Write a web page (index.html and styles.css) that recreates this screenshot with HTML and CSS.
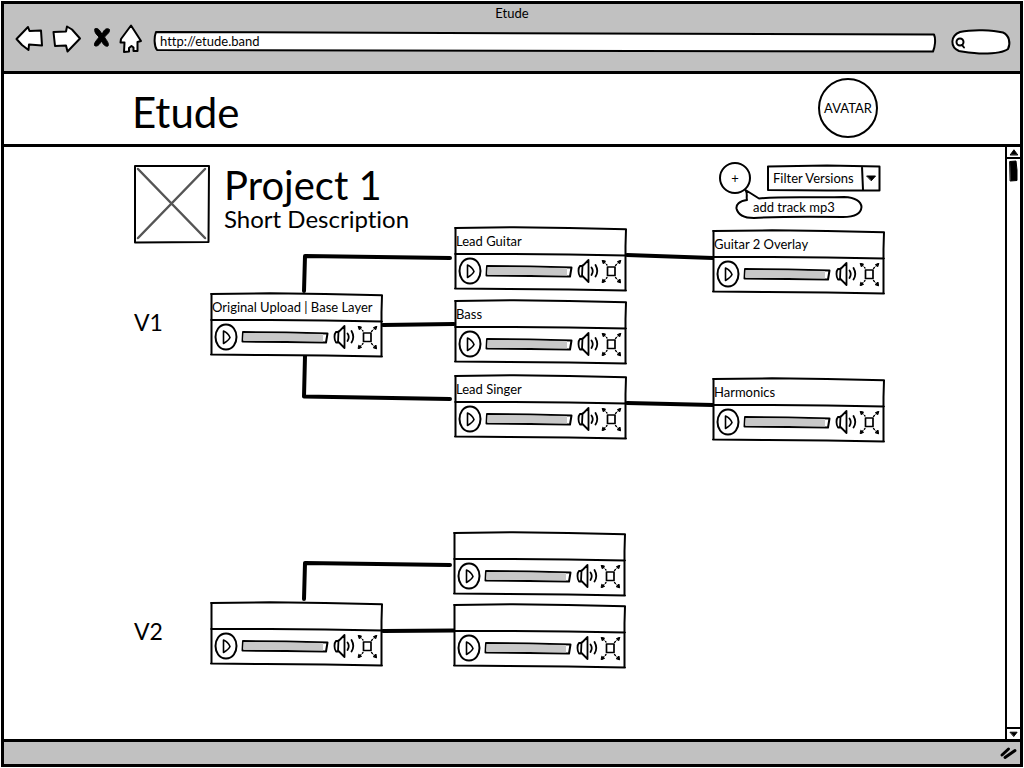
FILE: index.html
```html
<!DOCTYPE html>
<html lang="en">
<head>
<meta charset="utf-8">
<title>Etude</title>
<link rel="stylesheet" href="styles.css">
</head>
<body>
<svg class="defs" aria-hidden="true">
  <symbol id="frame" viewBox="0 0 174 66">
    <path fill="#fff" stroke="none" d="M1 2L172 3V64L1 62Z"/>
    <path d="M1 2L60 1.300L115 2L172 3.300M1.500 2V62.500M172 3.300L171.500 20L171.500 64.500M1 28L60 28L115 28.500L172 29.500M1 62.500L55 63L115 63.500L172 64.500"/>
  </symbol>
  <symbol id="play" viewBox="0 0 24 28">
    <path d="M12 1.500C19 1.500 22.500 8 22.500 14S19 26.500 12 26.500S1.500 20 1.500 14S5 1.500 12 1.500Z"/>
    <path stroke-width="1.600" d="M9.500 8V20.500C12 19 15 17 16 14.500C15 12 12 9 9.500 8Z"/>
  </symbol>
  <symbol id="bar" viewBox="0 0 88 14">
    <path fill="#fff" d="M2 2L45 2.500L86.500 3.500L85 12.500L45 12L1.500 11.500Z"/>
    <path fill="#c8c8c8" stroke="none" d="M2.500 3L45 3.500L82 4V11.500L45 11L2 10.500Z"/>
  </symbol>
  <symbol id="volume" viewBox="0 0 24 26">
    <path stroke-width="1.800" d="M5.500 8H3C1 10 1 16 3 18.500H5.500M5.500 7.500L5 18M5.500 8L11.500 2V24L5.500 18"/>
    <path stroke-width="1.800" d="M14.500 9.500Q17 13 14.500 17M18.500 7Q22 13 18.500 18.500"/>
  </symbol>
  <symbol id="expand" viewBox="0 0 22 26">
    <path stroke-width="1.700" d="M6.500 9H14V17.500H6.500Z"/>
    <path stroke-width="1.300" stroke-dasharray="3 2" d="M2 3L6 7M19 3L14.500 7.500M2 24L6 19.500M19 24L14.500 19.500"/>
    <path fill="#000" stroke-width="1" d="M1.500 2.500L4.500 3L2.500 5.500ZM19.500 2.500L16.500 3.500L18.500 5.500ZM1.500 24.500L4.500 23.500L2 21.500ZM19.500 24.500L19 21L16.500 23.500Z"/>
  </symbol>
</svg>

<div class="window">
  <div class="chrome">
    <div class="tab-title">Etude</div>
    <form class="toolbar">
      <button type="button" class="nav-btn nav-back" aria-label="Back">
        <svg viewBox="0 0 28 28"><path d="M1.500 15L13 3L14.500 7L26 6.500L27 21.500L14 20.500L13.500 26L7 21Z"/></svg>
      </button>
      <button type="button" class="nav-btn nav-forward" aria-label="Forward">
        <svg viewBox="0 0 28 28"><path d="M1.500 8L14 7.500L15 2.500L20 5.500L28 14.500L15.500 27.500L14 21.500L3 22Z"/></svg>
      </button>
      <button type="button" class="nav-btn nav-stop" aria-label="Stop">
        <svg viewBox="0 0 18 28"><path fill="#000" stroke-width="1" d="M2 5C4 3 7 6 9 10.500C11 5 14 3.500 16.500 5.500C17 9 13 11 11.500 13C13 16 16.500 19 15 22C12 23 10 20 8.500 17C7 20 4 23.500 1.500 21.500C1 18 5 15 6 13C3 10 1 8 2 5Z"/></svg>
      </button>
      <button type="button" class="nav-btn nav-home" aria-label="Home">
        <svg viewBox="0 0 24 28"><path d="M12 1.500L22 17L18.500 18L18.500 27H14.500L14.500 23.500L12.500 22L10 24V27.500L5 28L5.500 18.500H1.500L2 15Z"/></svg>
      </button>
      <label class="field url">
        <svg viewBox="0 0 784 22" preserveAspectRatio="none"><path d="M3 1L782 3.500C784 8 783 16 781 20.500L4 19C1 15 1 6 3 1Z"/></svg>
        <input type="text" value="http://etude.band" aria-label="Address">
      </label>
      <label class="field search">
        <svg viewBox="0 0 60 26"><path d="M9 3C22 0 42 1 52 3.500C58 6 60 14 57 20C52 24 40 24.500 32 24.500C24 24.500 15 23 8 22C-1 18 -1 7 9 3Z"/><circle cx="9" cy="13" r="3.500"/><path d="M11 16L13 18.500"/></svg>
        <input type="search" aria-label="Search">
      </label>
    </form>
  </div>

  <header class="site-header">
    <div class="site-inner">
      <h1>Etude</h1>
      <button type="button" class="avatar">AVATAR</button>
    </div>
  </header>

  <div class="viewport">
    <main class="content">
      <div class="project">
        <svg class="thumb" viewBox="0 0 78 80" role="img" aria-label="Project image"><path class="cross" d="M4 4L71 73M71 4L4 73"/><path d="M1 1L75 1L74.500 77L1 77.500Z"/></svg>
        <div class="project-text">
          <h2>Project 1</h2>
          <p>Short Description</p>
        </div>
        <div class="actions">
          <div class="add-wrap">
            <button type="button" class="add" aria-label="Add track" aria-describedby="add-tip">+</button>
            <div class="tip" id="add-tip" role="tooltip">
              <svg viewBox="0 0 128 30"><path d="M10.500 1C13 5 11 8 12 11C4 12 1 16 1.500 19.500C3 26 9 29 19 29C45 27.500 80 27.500 108 28C119 28 126 25 126.500 18C126 12 119 8.500 109 8C80 9 50 7 24 9.500Z"/></svg>
              <span>add track mp3</span>
            </div>
          </div>
          <label class="filter">
            <svg viewBox="0 0 114 27"><path d="M1 1.500L60 .5L112.500 1.500V25.500L60 25.500L1 25ZM95 1.500L96 25"/><path class="solid" d="M100 11H108.500L104.500 15.500Z"/></svg>
            <select aria-label="Filter Versions"><option>Filter Versions</option></select>
          </label>
        </div>
      </div>

      <section class="version">
        <h3>V1</h3>
        <svg class="wires" viewBox="0 0 751 300" aria-hidden="true"><path d="M170 65L171 30L316 32M249 99L320 98M171 130L170 170.500L316 173M493 29L579 32M493 177L579 179"/></svg>
        <article class="track base">
          <svg class="frame"><use href="#frame"/></svg>
          <h4>Original Upload | Base Layer</h4>
          <div class="controls">
            <button type="button" class="i-play" aria-label="Play"><svg><use href="#play"/></svg></button>
            <svg class="i-bar"><use href="#bar"/></svg>
            <button type="button" class="i-volume" aria-label="Volume"><svg><use href="#volume"/></svg></button>
            <button type="button" class="i-expand" aria-label="Expand"><svg><use href="#expand"/></svg></button>
          </div>
        </article>
        <article class="track guitar">
          <svg class="frame"><use href="#frame"/></svg>
          <h4>Lead Guitar</h4>
          <div class="controls">
            <button type="button" class="i-play" aria-label="Play"><svg><use href="#play"/></svg></button>
            <svg class="i-bar"><use href="#bar"/></svg>
            <button type="button" class="i-volume" aria-label="Volume"><svg><use href="#volume"/></svg></button>
            <button type="button" class="i-expand" aria-label="Expand"><svg><use href="#expand"/></svg></button>
          </div>
        </article>
        <article class="track bass">
          <svg class="frame"><use href="#frame"/></svg>
          <h4>Bass</h4>
          <div class="controls">
            <button type="button" class="i-play" aria-label="Play"><svg><use href="#play"/></svg></button>
            <svg class="i-bar"><use href="#bar"/></svg>
            <button type="button" class="i-volume" aria-label="Volume"><svg><use href="#volume"/></svg></button>
            <button type="button" class="i-expand" aria-label="Expand"><svg><use href="#expand"/></svg></button>
          </div>
        </article>
        <article class="track singer">
          <svg class="frame"><use href="#frame"/></svg>
          <h4>Lead Singer</h4>
          <div class="controls">
            <button type="button" class="i-play" aria-label="Play"><svg><use href="#play"/></svg></button>
            <svg class="i-bar"><use href="#bar"/></svg>
            <button type="button" class="i-volume" aria-label="Volume"><svg><use href="#volume"/></svg></button>
            <button type="button" class="i-expand" aria-label="Expand"><svg><use href="#expand"/></svg></button>
          </div>
        </article>
        <article class="track overlay">
          <svg class="frame"><use href="#frame"/></svg>
          <h4>Guitar 2 Overlay</h4>
          <div class="controls">
            <button type="button" class="i-play" aria-label="Play"><svg><use href="#play"/></svg></button>
            <svg class="i-bar"><use href="#bar"/></svg>
            <button type="button" class="i-volume" aria-label="Volume"><svg><use href="#volume"/></svg></button>
            <button type="button" class="i-expand" aria-label="Expand"><svg><use href="#expand"/></svg></button>
          </div>
        </article>
        <article class="track harmonics">
          <svg class="frame"><use href="#frame"/></svg>
          <h4>Harmonics</h4>
          <div class="controls">
            <button type="button" class="i-play" aria-label="Play"><svg><use href="#play"/></svg></button>
            <svg class="i-bar"><use href="#bar"/></svg>
            <button type="button" class="i-volume" aria-label="Volume"><svg><use href="#volume"/></svg></button>
            <button type="button" class="i-expand" aria-label="Expand"><svg><use href="#expand"/></svg></button>
          </div>
        </article>
      </section>

      <section class="version second">
        <h3>V2</h3>
        <svg class="wires" viewBox="0 0 751 200" aria-hidden="true"><path d="M170 73L171 37L316 39M249 105L320 104.500"/></svg>
        <article class="track base-two">
          <svg class="frame"><use href="#frame"/></svg>
          <h4></h4>
          <div class="controls">
            <button type="button" class="i-play" aria-label="Play"><svg><use href="#play"/></svg></button>
            <svg class="i-bar"><use href="#bar"/></svg>
            <button type="button" class="i-volume" aria-label="Volume"><svg><use href="#volume"/></svg></button>
            <button type="button" class="i-expand" aria-label="Expand"><svg><use href="#expand"/></svg></button>
          </div>
        </article>
        <article class="track upper-two">
          <svg class="frame"><use href="#frame"/></svg>
          <h4></h4>
          <div class="controls">
            <button type="button" class="i-play" aria-label="Play"><svg><use href="#play"/></svg></button>
            <svg class="i-bar"><use href="#bar"/></svg>
            <button type="button" class="i-volume" aria-label="Volume"><svg><use href="#volume"/></svg></button>
            <button type="button" class="i-expand" aria-label="Expand"><svg><use href="#expand"/></svg></button>
          </div>
        </article>
        <article class="track lower-two">
          <svg class="frame"><use href="#frame"/></svg>
          <h4></h4>
          <div class="controls">
            <button type="button" class="i-play" aria-label="Play"><svg><use href="#play"/></svg></button>
            <svg class="i-bar"><use href="#bar"/></svg>
            <button type="button" class="i-volume" aria-label="Volume"><svg><use href="#volume"/></svg></button>
            <button type="button" class="i-expand" aria-label="Expand"><svg><use href="#expand"/></svg></button>
          </div>
        </article>
      </section>
    </main>

    <div class="scrollbar" aria-hidden="true">
      <svg class="scroll-up" viewBox="0 0 13 11"><path class="solid" d="M3 8.500L7 3L11 8.500Z"/></svg>
      <svg class="scroll-thumb" viewBox="0 0 9 22"><path class="solid" d="M1 1.500L7 1L8 10L8 20.500L1.500 21Z"/></svg>
      <svg class="scroll-down" viewBox="0 0 13 11"><path class="solid" d="M3 3.500H10.500L7 8Z"/></svg>
    </div>
  </div>

  <footer class="status">
    <svg viewBox="0 0 18 14"><path d="M2 9L8.500 3M5 11.500L15 4.500" stroke-width="3"/></svg>
  </footer>
</div>
</body>
</html>
```

FILE: styles.css
```css
* { box-sizing: border-box; }

body {
  margin: 0;
  padding: 1px;
  background: #fff;
  color: #000;
  font: 13px/16px Lato, "Liberation Sans", sans-serif;
  font-variant-ligatures: none;
}

h1, h2, h3, h4, p { margin: 0; font-weight: 400; }

button, input, select { font: inherit; color: inherit; padding: 0; }
button { background: none; border: 0; }

svg {
  display: block;
  fill: none;
  stroke: #000;
  stroke-width: 2;
  stroke-linecap: round;
  stroke-linejoin: round;
  overflow: visible;
}

.solid { fill: #000; stroke-width: 1; }
.defs { position: absolute; width: 0; height: 0; }

.window {
  display: flex;
  flex-direction: column;
  min-height: calc(100vh - 2px);
  border: 3px solid #000;
}

/* Browser chrome */
.chrome {
  height: 70px;
  background: #c1c1c1;
  border-bottom: 3px solid #000;
}

.tab-title { padding-top: 1px; text-align: center; }

.toolbar {
  display: flex;
  align-items: center;
  padding: 0 9px 0 11px;
}

.nav-btn svg { height: 28px; fill: #fff; }
.nav-back svg, .nav-forward svg { width: 28px; }
.nav-back, .nav-forward { margin-right: 9px; }
.nav-stop { margin: 0 8px 0 4px; }
.nav-stop svg { width: 18px; }
.nav-home { margin-right: 10px; }
.nav-home svg { width: 24px; }

.field { position: relative; display: block; margin-top: 8px; }
.field svg {
  position: absolute;
  inset: 0;
  width: 100%;
  height: 100%;
  fill: #fff;
}
.field path { vector-effect: non-scaling-stroke; }
.field input {
  position: relative;
  display: block;
  width: 100%;
  height: 100%;
  background: none;
  border: 0;
  outline: 0;
  appearance: none;
}
.url { flex: 1; height: 22px; }
.url input { padding: 0 7px 2px; }
.search { width: 60px; height: 26px; margin-left: 15px; }
.search input { padding-left: 18px; }

/* Site header */
.site-header { height: 73px; border-bottom: 3px solid #000; }
.site-inner {
  display: flex;
  align-items: center;
  justify-content: space-between;
  max-width: 874px;
  height: 100%;
  padding-left: 128px;
}
h1 { font-size: 42px; line-height: 48px; padding-top: 6px; }
.avatar {
  width: 60px;
  height: 60px;
  border: 2px solid #000;
  border-radius: 50%;
  margin-bottom: 2px;
}

/* Page area */
.viewport { display: flex; flex: 1; }
.content { flex: 1; padding: 18px 0 0 130px; }

.project { display: flex; max-width: 751px; height: 80px; }
.thumb { flex: none; width: 78px; height: 80px; }
.cross { stroke: #555; stroke-width: 2.5px; }
.project-text { flex: 1; padding-left: 12px; }
h2 { font-size: 40px; line-height: 40px; }
.project-text p { font-size: 24px; line-height: 28px; }

.actions { display: flex; gap: 16px; padding-right: 4px; }
.add-wrap { position: relative; height: 32px; margin-top: -3px; }
.add {
  display: block;
  width: 32px;
  height: 32px;
  border: 2px solid #000;
  border-radius: 50%;
}
.tip { position: absolute; top: 27px; left: 16px; width: 128px; height: 30px; }
.tip svg { position: absolute; inset: 0; fill: #fff; }
.tip span { position: relative; display: block; padding: 10px 0 0 18px; white-space: nowrap; }
.filter { position: relative; width: 114px; height: 27px; }
.filter svg { position: absolute; inset: 0; }
.filter select {
  position: relative;
  width: 100%;
  height: 25px;
  padding-left: 6px;
  background: none;
  border: 0;
  outline: 0;
  appearance: none;
}

/* Version map */
.version { position: relative; max-width: 751px; height: 300px; margin-top: -19px; }
.second { height: 200px; margin-top: 0; }
h3 { font-size: 23px; line-height: 28px; padding-top: 82px; }
.second h3 { padding-top: 91px; }
.wires { position: absolute; top: 0; left: 0; width: 751px; height: 100%; stroke-width: 4; }

.track { position: absolute; width: 174px; height: 66px; }
.frame { position: absolute; inset: 0; width: 174px; height: 66px; }
.track h4 { position: relative; height: 30px; padding: 7px 0 0 2px; white-space: nowrap; }
.controls { position: relative; display: flex; align-items: center; height: 30px; padding-left: 4px; }
.controls svg { display: block; }
.i-play, .i-play svg { width: 24px; height: 28px; }
.i-bar { width: 88px; height: 14px; margin: 0 4px 0 3px; }
.i-volume, .i-volume svg { width: 24px; height: 26px; }
.i-expand, .i-expand svg { width: 22px; height: 26px; }

.base { left: 76px; top: 66px; }
.guitar { left: 320px; top: 0; }
.bass { left: 320px; top: 73px; }
.singer { left: 320px; top: 148px; }
.overlay { left: 578px; top: 3px; }
.harmonics { left: 578px; top: 151px; }
.base-two { left: 76px; top: 75px; }
.upper-two { left: 319px; top: 5px; }
.lower-two { left: 319px; top: 77px; }

/* Scrollbar */
.scrollbar {
  display: flex;
  flex-direction: column;
  width: 15px;
  border-left: 2px solid #000;
}
.scroll-up, .scroll-down { width: 13px; height: 12px; }
.scroll-up { border-bottom: 2px solid #000; }
.scroll-down { margin-top: auto; border-top: 2px solid #000; }
.scroll-thumb { width: 9px; height: 22px; margin: 1px 0 0 2px; }

/* Status bar */
.status {
  display: flex;
  justify-content: flex-end;
  align-items: center;
  height: 25px;
  padding-right: 2px;
  background: #c1c1c1;
  border-top: 3px solid #000;
}
.status svg { width: 18px; height: 14px; }
```
